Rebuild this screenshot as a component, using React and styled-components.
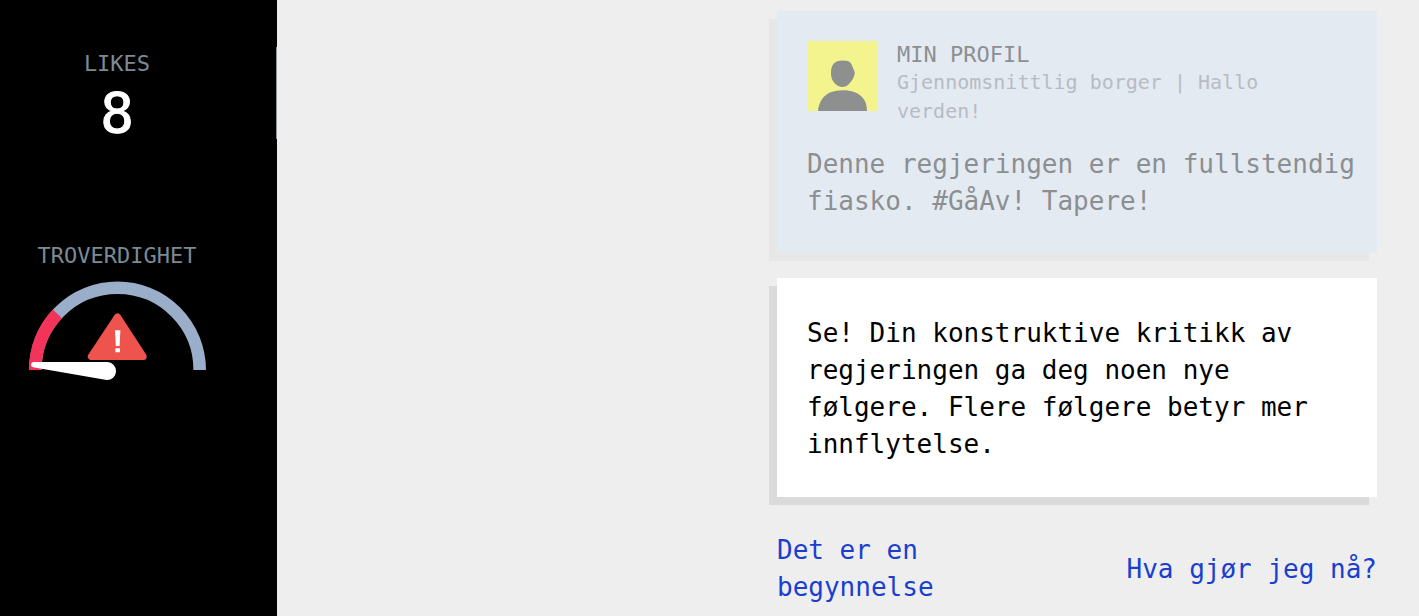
import styled, { createGlobalStyle } from 'styled-components'

const choices = ['Det er en begynnelse', 'Hva gjør jeg nå?']

const Gauge = () => (
  <GaugeSvg viewBox="0 0 178 104" role="img" aria-label="Lav troverdighet">
    <path d="M7.3 91 A82.2 82.2 0 0 1 171.7 91" fill="none" stroke="#9aaeca" strokeWidth="12.6" />
    <path d="M7.3 91 A82.2 82.2 0 0 1 29.4 34.9" fill="none" stroke="#f2335a" strokeWidth="12.6" />
    <path
      d="M89.5 38 L63.3 77.5 H115.2 Z"
      fill="#ef534e"
      stroke="#ef534e"
      strokeWidth="7"
      strokeLinejoin="round"
    />
    <path d="M87 51.3 H92.4 L91.6 67 H87.8 Z M87.4 69.2 H92 V73.3 H87.4 Z" fill="#fff" />
    <path d="M5.8 83 L79.5 83 A9 9 0 0 1 78.6 101 L5 88.3 A2.7 2.7 0 0 1 5.8 83 Z" fill="#fff" />
  </GaugeSvg>
)

const ProfileAvatar = () => (
  <Avatar viewBox="0 0 70 70" aria-hidden="true">
    <path
      d="M31 20 C34 19.3 38 19.3 41 20 C44 21.3 45 24 46 27 C47 29 48 31 47.7 33 C47 37 44.500 40 42 43 C39 46.700 32.500 47 29 43.500 C25 40 24 36 24 32 C24 26 26 21.500 31 20 Z"
      fill="#8e8f8f"
    />
    <path d="M11 70 C11.5 63 15 55 23 51.5 C31 48.5 41 48.5 47 51 C56 54 60 61 60 70 Z" fill="#8e8f8f" />
  </Avatar>
)

const App = () => {
  return (
    <>
      <GlobalStyle />
      <Page>
        <Sidebar>
          <Stat divider>
            <StatLabel>LIKES</StatLabel>
            <StatValue>8</StatValue>
          </Stat>
          <Stat>
            <StatLabel>TROVERDIGHET</StatLabel>
            <Gauge />
          </Stat>
        </Sidebar>

        <Main>
          <Feed>
            <Post>
              <PostHeader>
                <ProfileAvatar />
                <div>
                  <Name>MIN PROFIL</Name>
                  <Bio>Gjennomsnittlig borger | Hallo verden!</Bio>
                </div>
              </PostHeader>
              <Text>Denne regjeringen er en fullstendig fiasko. #GåAv! Tapere!</Text>
            </Post>

            <Message>
              <Text>
                Se! Din konstruktive kritikk av regjeringen ga deg noen nye følgere. Flere følgere
                betyr mer innflytelse.
              </Text>
            </Message>

            <Choices>
              {choices.map((choice) => (
                <Choice key={choice} type="button">
                  {choice}
                </Choice>
              ))}
            </Choices>
          </Feed>
        </Main>
      </Page>
    </>
  )
}

const GlobalStyle = createGlobalStyle`
  * {
    box-sizing: border-box;
  }

  body {
    margin: 0;
    background: #eeeeee;
    font-family: 'DejaVu Sans Mono', monospace;
  }
`

const Page = styled.div`
  display: flex;
  min-height: 100vh;
`

const Sidebar = styled.aside`
  flex: 0 0 277px;
  display: flex;
  flex-direction: column;
  gap: 100px;
  padding-top: 47px;
  background: #000;
`

const Stat = styled.section.withConfig({
  shouldForwardProp: (prop) => prop !== 'divider',
})`
  display: flex;
  flex-direction: column;
  align-items: center;
  gap: 6px;
  padding-right: 42px;
  border-right: 1px solid ${props => props.divider ? '#8b959c' : 'transparent'};
`

const StatLabel = styled.h2`
  margin: 0;
  font-size: 22px;
  font-weight: 400;
  line-height: 34px;
  color: #7c8a94;
`

const StatValue = styled.span`
  font-size: 56px;
  line-height: 52px;
  color: #fff;
  -webkit-text-stroke: 1px #fff;
`

const GaugeSvg = styled.svg`
  display: block;
  width: 178px;
  height: 104px;
`

const Main = styled.main`
  flex: 1;
  min-width: 0;
  display: flex;
  justify-content: flex-end;
  padding: 11px 42px 10px 20px;
`

const Feed = styled.div`
  width: 100%;
  max-width: 600px;
`

const Post = styled.article`
  padding: 30px 20px 33px 30px;
  margin-bottom: 25px;
  background: #e4eaf2;
  color: #8c8f91;
  box-shadow: -8px 8px 0 #e7e7e7;
`

const PostHeader = styled.header`
  display: flex;
  align-items: flex-start;
  gap: 20px;
  margin-bottom: 20px;
  padding-right: 10px;
`

const Avatar = styled.svg`
  flex: none;
  width: 70px;
  height: 70px;
  background: #f4f48f;
`

const Name = styled.h3`
  margin: 0;
  font-size: 22px;
  font-weight: 400;
  line-height: 27px;
`

const Bio = styled.p`
  margin: 0;
  font-size: 20px;
  line-height: 29px;
  color: #b7bcc3;
`

const Text = styled.p`
  margin: 0;
  font-size: 26px;
  line-height: 37px;
`

const Message = styled.section`
  padding: 37px 20px 34px 30px;
  background: #fff;
  color: #000;
  box-shadow: -8px 8px 0 #dadada;
`

const Choices = styled.div`
  display: flex;
  justify-content: space-between;
  align-items: center;
  padding-top: 35px;
`

const Choice = styled.button`
  max-width: 50%;
  padding: 0;
  border: none;
  background: none;
  font-family: inherit;
  font-size: 26px;
  line-height: 37px;
  text-align: left;
  color: #1a3fd0;
  cursor: pointer;
`

export default App
